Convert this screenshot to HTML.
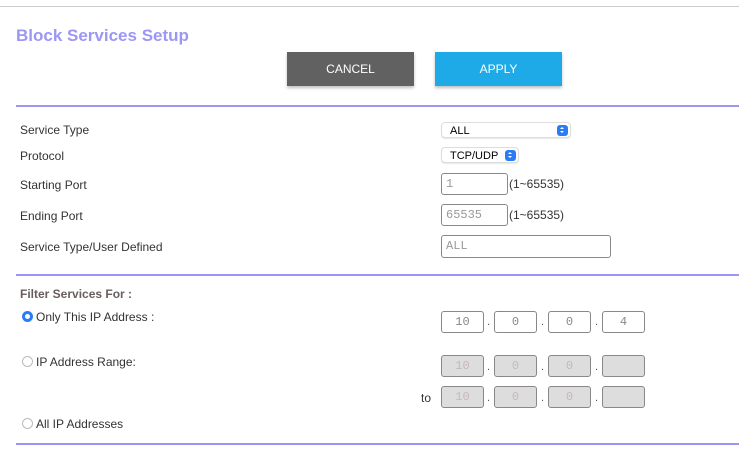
<!DOCTYPE html>
<html><head><style>
body{margin:0;width:739px;height:473px;background:#fff;font-family:"Liberation Sans",sans-serif;position:relative;overflow:hidden;color:#333}
.a{position:absolute}
.lbl{font-size:12px;color:#333}
.hr{position:absolute;left:16px;width:723px;height:2px;background:#9c96f2}
.btn{position:absolute;top:52px;width:127px;height:34px;color:#fff;font-size:12px;text-align:center;line-height:34px;box-shadow:0 2px 3px rgba(0,0,0,.25)}
.sel{position:absolute;height:16px;border:1px solid #ddd;border-radius:4px;background:#fff;font-size:11px;color:#000;line-height:16px;padding-left:8px;box-sizing:border-box;box-shadow:0 1px 1px rgba(0,0,0,.1)}
.sel i{position:absolute;right:2px;top:2px;width:11px;height:11px;background:#2a7cf6;border-radius:3px}
.sel i:before{content:"";position:absolute;left:3px;top:2px;border:2px solid transparent;border-bottom:2px solid #fff;width:0;height:0;border-width:0 2.5px 2.5px}
.sel i:after{content:"";position:absolute;left:3px;top:6px;border-style:solid;border-color:#fff transparent transparent;border-width:2.5px 2.5px 0}
.inp{position:absolute;height:22px;border:1px solid #888;border-radius:3px;box-sizing:border-box;font-family:"Liberation Mono",monospace;font-size:12px;color:#999;line-height:20px;padding-left:4px;background:#fff}
.ip{position:absolute;width:43px;height:22px;border:1px solid #888;border-radius:3px;box-sizing:border-box;font-family:"Liberation Mono",monospace;font-size:12px;color:#888;text-align:center;line-height:20px;background:#fff}
.dis{background:#ddd;color:#c8b8b8}
.dot{position:absolute;font-size:11px;color:#555}
.rad{position:absolute;left:22px;width:11px;height:11px;border:1px solid #bbb;border-radius:50%;box-sizing:border-box}
</style></head><body>
<div class="a" style="left:0;top:6px;width:739px;height:1px;background:#ccc"></div>
<div class="a" style="left:16px;top:26px;font-size:17px;font-weight:bold;color:#9d97f4">Block Services Setup</div>
<div class="btn" style="left:287px;background:#616161">CANCEL</div>
<div class="btn" style="left:435px;background:#1eaae7">APPLY</div>
<div class="hr" style="top:105px"></div>
<div class="a lbl" style="left:20px;top:123px">Service Type</div>
<div class="a lbl" style="left:20px;top:149px">Protocol</div>
<div class="a lbl" style="left:20px;top:178px">Starting Port</div>
<div class="a lbl" style="left:20px;top:209px">Ending Port</div>
<div class="a lbl" style="left:20px;top:240px">Service Type/User Defined</div>
<div class="sel" style="left:441px;top:122px;width:130px">ALL<i></i></div>
<div class="sel" style="left:441px;top:147px;width:78px">TCP/UDP<i></i></div>
<div class="inp" style="left:441px;top:173px;width:67px">1</div>
<div class="a lbl" style="left:509px;top:177px">(1~65535)</div>
<div class="inp" style="left:441px;top:204px;width:67px">65535</div>
<div class="a lbl" style="left:509px;top:208px">(1~65535)</div>
<div class="inp" style="left:441px;top:235px;width:170px;height:23px;line-height:21px">ALL</div>
<div class="hr" style="top:274px"></div>
<div class="a" style="left:20px;top:287px;font-size:12px;font-weight:bold;color:#6a5d5d">Filter Services For :</div>
<div class="rad" style="top:311px;border:3px solid #2a7cf6"></div>
<div class="a lbl" style="left:36px;top:310px">Only This IP Address :</div>
<div class="rad" style="top:356px"></div>
<div class="a lbl" style="left:36px;top:355px">IP Address Range:</div>
<div class="a lbl" style="left:421px;top:391px">to</div>
<div class="rad" style="top:418px"></div>
<div class="a lbl" style="left:36px;top:417px">All IP Addresses</div>

<div class="ip" style="left:441px;top:311px">10</div><div class="dot" style="left:487px;top:316px">.</div>
<div class="ip" style="left:494px;top:311px">0</div><div class="dot" style="left:541px;top:316px">.</div>
<div class="ip" style="left:548px;top:311px">0</div><div class="dot" style="left:595px;top:316px">.</div>
<div class="ip" style="left:602px;top:311px">4</div>

<div class="ip dis" style="left:441px;top:355px">10</div><div class="dot" style="left:487px;top:361px">.</div>
<div class="ip dis" style="left:494px;top:355px">0</div><div class="dot" style="left:541px;top:361px">.</div>
<div class="ip dis" style="left:548px;top:355px">0</div><div class="dot" style="left:595px;top:361px">.</div>
<div class="ip dis" style="left:602px;top:355px"></div>

<div class="ip dis" style="left:441px;top:386px">10</div><div class="dot" style="left:487px;top:392px">.</div>
<div class="ip dis" style="left:494px;top:386px">0</div><div class="dot" style="left:541px;top:392px">.</div>
<div class="ip dis" style="left:548px;top:386px">0</div><div class="dot" style="left:595px;top:392px">.</div>
<div class="ip dis" style="left:602px;top:386px"></div>
<div class="hr" style="top:443px"></div>
</body></html>
